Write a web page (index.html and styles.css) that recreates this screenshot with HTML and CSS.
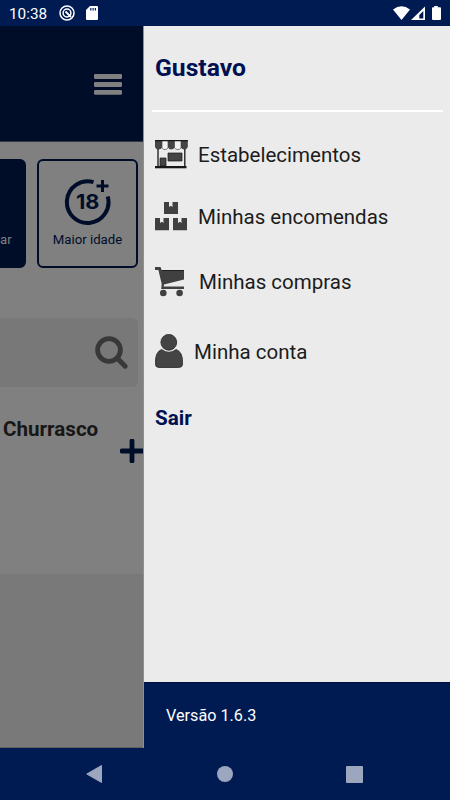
FILE: index.html
```html
<!DOCTYPE html>
<html lang="pt-BR">
<head>
<meta charset="utf-8">
<title>Menu</title>
<link rel="stylesheet" href="styles.css">
</head>
<body>
<div class="phone">
  <header class="status">
    <span class="clock">10:38</span>
    <svg class="status-target" width="16" height="16" viewBox="0 0 16 16"><circle cx="8" cy="8" r="7" fill="none" stroke="#fff" stroke-width="1.500"/><circle cx="8" cy="8" r="3.900" fill="none" stroke="#fff" stroke-width="1.500"/><path d="M6.500 6.500l5.500 5.500" stroke="#fff" stroke-width="1.800"/></svg>
    <svg class="status-card" width="12" height="14" viewBox="0 0 12 14"><path d="M4 0h7q1 0 1 1v12q0 1-1 1H1q-1 0-1-1V4z" fill="#fff"/><path d="M4.800 2v2.500M7.100 2v2.500M9.400 2v2.500" stroke="#001b52" stroke-width="1.200"/></svg>
    <span class="spacer"></span>
    <svg class="signals" width="50" height="15" viewBox="0 0 50 15"><path d="M0 3.500Q8.500-3 17 3.500L8.500 14z" fill="#fff"/><path d="M32 .5V14H18z" fill="#fff"/><path d="M30.300 5v7.500h-4V9z" fill="#001b52"/><path d="M39 2.200q0-1 1-1h1.200V0h3.600v1.200H47q1 0 1 1V13q0 1-1 1h-7q-1 0-1-1z" fill="#fff"/></svg>
  </header>
  <main class="screen">
    <section class="page">
      <div class="topbar">
        <svg width="28" height="21" viewBox="0 0 28 21"><path d="M0 1.200Q0 0 1.200 0h25.600Q28 0 28 1.200v2.600Q28 5 26.800 5H1.200Q0 5 0 3.800zM0 9.200Q0 8 1.200 8h25.600Q28 8 28 9.200v2.600Q28 13 26.800 13H1.200Q0 13 0 11.800zM0 17.200Q0 16 1.200 16h25.600Q28 16 28 17.200v2.400Q28 20.800 26.800 20.800H1.200Q0 20.800 0 19.600z" fill="#808080"/></svg>
      </div>
      <div class="cards">
        <div class="card card-active"><span>ar</span></div>
        <div class="card card-age">
          <svg width="48" height="48" viewBox="0 0 48 48"><path d="M29.500 4.200A20.800 20.800 0 1 0 43.700 18.500" fill="none" stroke="#000d29" stroke-width="4"/><path d="M38.500 2v12M32.500 8h12" stroke="#000d29" stroke-width="3"/><text x="12" y="31.300" textLength="23.500" lengthAdjust="spacingAndGlyphs" class="age-number">18</text></svg>
          <span>Maior idade</span>
        </div>
      </div>
      <div class="search">
        <svg width="34" height="34" viewBox="0 0 34 34"><circle cx="14" cy="14" r="11.400" fill="none" stroke="#383838" stroke-width="4.800"/><path d="M23 23l7.200 7.200" stroke="#383838" stroke-width="5" stroke-linecap="round"/></svg>
      </div>
      <div class="category">
        <h2>Churrasco</h2>
        <svg width="24" height="24" viewBox="0 0 24 24"><path d="M12 2v20M2 12h22" stroke="#000d29" stroke-width="4.800" stroke-linecap="round"/></svg>
      </div>
      <div class="page-end"></div>
    </section>
    <aside class="drawer">
      <h1>Gustavo</h1>
      <nav class="menu">
        <a class="item stores">
          <svg width="33" height="29" viewBox="0 0 33 29"><path d="M7 0h6v8q-1.200 1.600-3 1.600T7 8zM19.500 0H26v8q-1.200 1.600-3.200 1.600T19.500 8z" fill="#f2f2f2" stroke="#333" stroke-width=".6"/><path d="M0 0h7v7.500Q6 9.500 3.500 9.500T0 7zM13 0h6.500v7.500Q18.500 9.500 16.300 9.500T13 7.500zM26 0h6.800v7q-1 2.500-3.500 2.500T26 7.500z" fill="#444"/><path d="M0 .7h32.800M3 9v17M29.800 9v17" fill="none" stroke="#171717" stroke-width="1.300"/><path d="M13 13h14v8H13zM5 18h6v8H5z" fill="#444" stroke="#171717" stroke-width=".7"/><path d="M0 26h31.500v2.300H0z" fill="#171717"/></svg>
          <span>Estabelecimentos</span>
        </a>
        <a class="item orders">
          <svg width="32" height="29" viewBox="0 0 32 29"><path d="M9 0h5v5l1.800-1.300L17.500 5V0H23v12H9zM0 16h5v5l1.800-1.300L8.500 21v-5H14v12.300H0zM18 16h5v5l1.800-1.300 1.700 1.300v-5H32v12.300H18z" fill="#404040"/></svg>
          <span>Minhas encomendas</span>
        </a>
        <a class="item cart">
          <svg width="30" height="30" viewBox="0 0 30 30"><path d="M0 0h5.500l1.300 3.500H29v9L9 17.500l-.4 2H29V22H6.200L6.700 17 3.400 3H0z" fill="#404040"/><path d="M7 3.500h22" stroke="#202020"/><circle cx="8.300" cy="26" r="3.300" fill="#404040"/><circle cx="24.600" cy="26" r="3.300" fill="#404040"/></svg>
          <span>Minhas compras</span>
        </a>
        <a class="item account">
          <svg width="28" height="34" viewBox="0 0 28 34"><circle cx="13.800" cy="8.300" r="7.900" fill="#444" stroke="#262626" stroke-width=".8"/><path d="M6.500 15.500Q13.800 21 21.200 15.500 27.600 18 27.600 28v2q0 3.500-4 3.500H4q-3.600 0-3.600-3.500v-2Q.4 18 6.500 15.500z" fill="#444" stroke="#262626" stroke-width=".8"/></svg>
          <span>Minha conta</span>
        </a>
      </nav>
      <a class="logout">Sair</a>
      <footer class="version">Versão 1.6.3</footer>
    </aside>
  </main>
  <nav class="system">
    <svg width="17" height="18" viewBox="0 0 17 18"><path d="M15.500 .5v17L.8 9z" fill="#9da6bf" stroke="#9da6bf" stroke-linejoin="round"/></svg>
    <svg width="16" height="16" viewBox="0 0 16 16"><circle cx="8" cy="8" r="8" fill="#9da6bf"/></svg>
    <svg width="17" height="17" viewBox="0 0 17 17"><rect width="17" height="17" rx="1" fill="#9da6bf"/></svg>
  </nav>
</div>
</body>
</html>
```
FILE: styles.css
```css
* { box-sizing: border-box; }
body { margin: 0; font-family: Roboto, sans-serif; }
svg { display: block; flex: none; }
h1, h2 { margin: 0; }
.phone { width: 450px; height: 800px; display: flex; flex-direction: column; overflow: hidden; }
.status { height: 26px; background: #001b52; color: #fff; display: flex; align-items: center; padding: 0 7px 0 9px; }
.clock { width: 50px; font-size: 15.3px; line-height: 26px; padding-top: 2px; }
.status-card { margin-left: 11px; }
.spacer { flex: 1; }
.screen { height: 722px; display: flex; }
.page { width: 144px; background: #808080; display: flex; flex-direction: column; overflow: hidden; border-right: 1px solid #909090; }
.topbar { height: 116px; flex: none; background: #000d29; border-bottom: 1px solid #303747; padding: 48px 0 0 94px; }
.cards { display: flex; gap: 11px; margin-top: 17px; height: 109px; flex: none; }
.card { border: 2px solid #000d29; border-radius: 6px; height: 109px; font-size: 13.2px; line-height: 16px; }
.card-active { width: 26px; flex: none; border-radius: 0 6px 6px 0; background: #000d29; color: #808080; padding-top: 71px; }
.card-active span { margin-left: -2px; }
.card-age { width: 101px; flex: none; color: #000d29; display: flex; flex-direction: column; align-items: center; padding-top: 17px; }
.card-age span { margin-top: 6px; white-space: nowrap; }
.age-number { font: 700 20px Inter, sans-serif; fill: #000d29; }
.search { height: 69px; flex: none; width: 138px; margin-top: 50px; background: #787878; border-radius: 0 6px 6px 0; padding: 18px 0 0 95px; }
.category { height: 187px; flex: none; padding-left: 3px; }
.category h2 { margin-top: 29px; font-size: 20.6px; line-height: 26px; font-weight: 700; color: #171717; white-space: nowrap; }
.category svg { margin: -3px 0 0 117px; }
.page-end { flex: 1; background: #797979; border-bottom: 1px solid #606060; }
.drawer { width: 306px; background: #ebebeb; display: flex; flex-direction: column; }
.drawer h1 { height: 86px; margin: 0 7px 0 8px; padding: 26px 0 0 3px; border-bottom: 2px solid #fff; font-size: 24.7px; line-height: 32px; color: #001050; font-weight: 700; }
.menu { display: flex; flex-direction: column; padding-left: 11px; color: #1c1c1c; font-size: 20.5px; line-height: 24px; }
.item { display: flex; align-items: center; }
.stores { margin-top: 27px; height: 30px; gap: 10px; }
.stores span, .account span { padding-top: 2px; }
.orders { margin-top: 33px; height: 29px; gap: 11px; }
.cart { margin-top: 35px; height: 31px; gap: 14px; }
.account { margin-top: 37px; height: 34px; gap: 11px; }
.logout { margin: 37px 0 0 11px; font-size: 20.6px; line-height: 26px; font-weight: 700; color: #001050; }
.version { margin-top: auto; height: 66px; background: #001b52; border-top: 1px solid #000d36; color: #fff; padding: 23px 0 0 22px; font-size: 16.2px; line-height: 20px; }
.system { height: 52px; background: #001b52; display: flex; justify-content: space-between; align-items: center; padding: 0 87px 0 86px; }
```
